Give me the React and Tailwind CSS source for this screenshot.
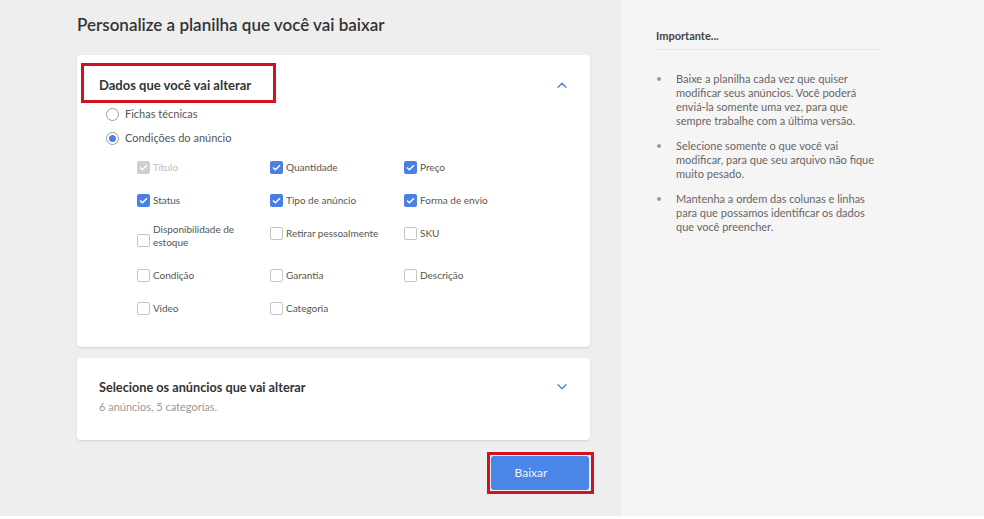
import React from 'react';

const font = { fontFamily: 'Lato, "Open Sans", Arial, sans-serif' };

const Chevron = ({ up }) => (
  <svg width="10" height="6" viewBox="0 0 10 6" className="shrink-0">
    <polyline
      points={up ? '1,5.2 5,1.2 9,5.2' : '1,0.8 5,4.8 9,0.8'}
      fill="none"
      stroke="#4a7fd8"
      strokeWidth="1.3"
      strokeLinecap="round"
      strokeLinejoin="round"
    />
  </svg>
);

const Check = ({ checked, disabled }) => {
  if (checked) {
    return (
      <span
        className={`w-[13px] h-[13px] rounded-[2px] flex items-center justify-center shrink-0 ${
          disabled ? 'bg-[#cfcfcf]' : 'bg-[#4a80e6]'
        }`}
      >
        <svg width="9" height="7" viewBox="0 0 9 7">
          <polyline points="1,3.5 3.4,5.8 8,1.2" fill="none" stroke="#fff" strokeWidth="1.5" />
        </svg>
      </span>
    );
  }
  return <span className="block w-[13px] h-[13px] rounded-[2px] border border-[#c4c4c4] bg-white shrink-0" />;
};

const Option = ({ label, checked, disabled }) => (
  <div className="flex items-center gap-[3px] h-[20px]">
    <Check checked={checked} disabled={disabled} />
    <span className={`text-[10px] ${disabled ? 'text-[#bdbdbd]' : 'text-[#555]'}`}>{label}</span>
  </div>
);

const Radio = ({ label, selected }) => (
  <div className="flex items-center gap-[6px] h-[24px]">
    <span className="w-[13px] h-[13px] rounded-full border border-[#9a9a9a] bg-white flex items-center justify-center">
      {selected && <span className="w-[7px] h-[7px] rounded-full bg-[#4a80e6]" />}
    </span>
    <span className="text-[11px] text-[#555]">{label}</span>
  </div>
);

const tips = [
  'Baixe a planilha cada vez que quiser modificar seus anúncios. Você poderá enviá-la somente uma vez, para que sempre trabalhe com a última versão.',
  'Selecione somente o que você vai modificar, para que seu arquivo não fique muito pesado.',
  'Mantenha a ordem das colunas e linhas para que possamos identificar os dados que você preencher.',
];

export default function App() {
  return (
    <div style={font} className="bg-white">
      <div className="h-[516px] flex">
        {/* Main column */}
        <div className="w-[622px] bg-[#eeeeee] pl-[77px] pr-[32px] pt-[13px]">
          <h1 className="text-[17px] leading-[24px] font-semibold text-[#333]">
            Personalize a planilha que você vai baixar
          </h1>

          {/* Card 1 */}
          <div className="relative mt-[18px] h-[292px] bg-white rounded-[4px] shadow-[0_1px_2px_rgba(0,0,0,0.12)]">
            <div className="absolute left-[4px] top-[8px] w-[195px] h-[40px] border-[3px] border-[#d3121f]" />
            <div className="flex items-center justify-between pl-[22px] pr-[23px] pt-[20px]">
              <span className="text-[13px] leading-[20px] font-bold text-[#333]">Dados que você vai alterar</span>
              <Chevron up />
            </div>
            <div className="pl-[29px] mt-[7px]">
              <Radio label="Fichas técnicas" />
              <Radio label="Condições do anúncio" selected />
            </div>
            <div className="pl-[60px] mt-[7px] grid grid-cols-[133px_134px_134px] gap-y-[13px] items-start">
              <Option label="Título" checked disabled />
              <Option label="Quantidade" checked />
              <Option label="Preço" checked />

              <Option label="Status" checked />
              <Option label="Tipo de anúncio" checked />
              <Option label="Forma de envio" checked />

              <div className="flex items-end gap-[3px] pb-[3px]">
                <span className="mb-[2px]">
                  <Check />
                </span>
                <span className="text-[10px] leading-[13px] text-[#555] w-[100px]">Disponibilidade de estoque</span>
              </div>
              <Option label="Retirar pessoalmente" />
              <Option label="SKU" />

              <Option label="Condição" />
              <Option label="Garantia" />
              <Option label="Descrição" />

              <Option label="Vídeo" />
              <Option label="Categoria" />
            </div>
          </div>

          {/* Card 2 */}
          <div className="mt-[11px] h-[82px] bg-white rounded-[4px] shadow-[0_1px_2px_rgba(0,0,0,0.12)] pl-[22px] pr-[23px] pt-[20px]">
            <div className="flex items-center justify-between">
              <span className="text-[12.7px] leading-[18px] font-bold text-[#333]">
                Selecione os anúncios que vai alterar
              </span>
              <Chevron />
            </div>
            <p className="mt-[3px] text-[11px] leading-[16px] text-[#999]">6 anúncios, 5 categorías.</p>
          </div>

          <div className="flex justify-end mt-[12px] -mr-[4px]">
            <div className="border-[3px] border-[#d3121f] pl-[1px] pr-[2px] py-[1px]">
              <button className="block w-[98px] h-[34px] rounded-[3px] bg-[#4a86e8] text-[12px] text-[#eef3fd] pr-[18px]">
                Baixar
              </button>
            </div>
          </div>
        </div>

        {/* Side panel */}
        <div className="flex-1 bg-[#f5f5f5] pl-[34px] pt-[29px]">
          <div className="w-[224px]">
            <h2 className="text-[11px] leading-[14px] font-bold text-[#444]">Importante...</h2>
            <div className="mt-[6px] h-px bg-[#e6e6e6]" />
          </div>
          <ul className="mt-[22px] w-[220px] flex flex-col gap-[11px]">
            {tips.map((t) => (
              <li key={t} className="flex">
                <span className="w-[4px] h-[4px] rounded-full bg-[#9b9b9b] mt-[5px] ml-[1px] mr-[15px] shrink-0" />
                <span className="text-[11px] leading-[14px] text-[#666]">{t}</span>
              </li>
            ))}
          </ul>
        </div>
      </div>
    </div>
  );
}
